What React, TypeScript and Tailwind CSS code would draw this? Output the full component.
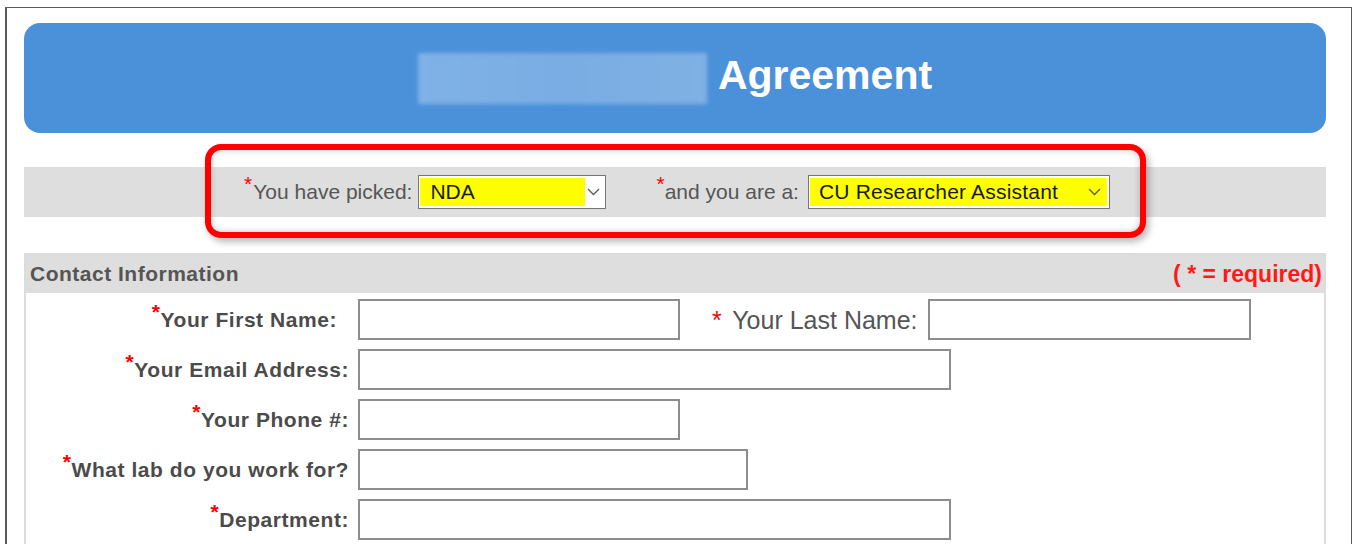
import React from "react";

const FONT = "font-['Liberation_Sans',Arial,sans-serif]";

function Chevron() {
  return (
    <svg width="13" height="8" viewBox="0 0 13 8" className="shrink-0">
      <polyline points="1,1 6.5,6.5 12,1" fill="none" stroke="#5a5a5a" strokeWidth="1.3" />
    </svg>
  );
}

function SupStar() {
  return <span className="relative -top-[8px] text-[#ff0000]">*</span>;
}

type FieldProps = {
  label: string;
  inputWidth: string;
  labelPad?: string;
  children?: React.ReactNode;
};

function FieldRow({ label, inputWidth, labelPad = "pr-[9px]", children }: FieldProps) {
  return (
    <div className="flex h-[41px] items-center">
      <div className={`w-[332px] text-right text-[21px] font-bold leading-[24px] tracking-[0.55px] text-[#4b4b4b] ${labelPad}`}>
        <SupStar />
        {label}
      </div>
      <div className={`h-[41px] border-2 border-[#8d8d8d] bg-white ${inputWidth}`} />
      {children}
    </div>
  );
}

export default function App() {
  return (
    <div className={`h-[544px] w-[1352px] overflow-hidden bg-white ${FONT}`}>
      <div className="ml-[5px] mt-[7px] h-[600px] w-[1347px] border-l-2 border-r border-t border-[#5a5a5a] pl-[17px] pt-[15px]">
        {/* Title banner */}
        <div className="flex h-[110px] w-[1302px] items-center justify-center gap-[11px] rounded-[16px] bg-[#4b91d9]">
          <div className="h-[51px] w-[289px] bg-gradient-to-r from-[#80b2e7] via-[#7aade3] to-[#80b1e5] blur-[2px]" />
          <div className="pb-[5px] text-[41px] font-bold leading-none text-white">Agreement</div>
        </div>

        {/* Agreement type picker */}
        <div className="relative mt-[34px] flex h-[50px] w-[1302px] items-center justify-center bg-[#dedede] pl-[4px] text-[21px] leading-[24px]">
          <div className="flex items-center">
            <span className="text-[#555555]">
              <SupStar />
              <span className="ml-[1px]">You have picked:</span>
            </span>
            <div className="ml-[6px] flex h-[34px] w-[188px] items-stretch border border-[#767676] bg-white py-[2px] pl-[1px] pr-[2px]">
              <div className="flex w-[165px] items-center bg-[#ffff00] pl-[10px] text-[#1a1a1a]">NDA</div>
              <div className="flex flex-1 items-center justify-center pr-[1px]">
                <Chevron />
              </div>
            </div>
          </div>
          <div className="ml-[50px] flex items-center">
            <span className="text-[#555555]">
              <SupStar />
              and you are a:
            </span>
            <div className="ml-[9px] flex h-[34px] w-[302px] items-stretch border border-[#767676] bg-white py-[2px] pl-[1px] pr-[2px]">
              <div className="flex flex-1 items-center justify-between bg-[#ffff00] pl-[9px] pr-[6px] tracking-[0.2px] text-[#1a1a1a]">
                <span>CU Researcher Assistant</span>
                <Chevron />
              </div>
            </div>
          </div>

          {/* Highlight frame drawn over the picker */}
          <div className="pointer-events-none absolute left-[181px] top-[-23px] h-[94px] w-[941px] rounded-[16px] border-[6px] border-[#ff0000] shadow-[inset_0_0_7px_rgba(0,0,0,0.22),3px_4px_7px_rgba(0,0,0,0.28)]" />
        </div>

        {/* Contact information */}
        <div className="mt-[36px] w-[1302px] border-2 border-[#dcdcdc] bg-white">
          <div className="flex h-[38px] items-center justify-between bg-[#dedede] pl-[4px] pr-[2px]">
            <span className="text-[21px] font-bold leading-[24px] tracking-[0.5px] text-[#555555]">Contact Information</span>
            <span className="text-[23px] font-bold leading-[24px] text-[#ff1a1a]">( * = required)</span>
          </div>
          <div className="flex flex-col gap-[9px] pb-[4px] pt-[6px]">
            <FieldRow label="Your First Name:" inputWidth="w-[322px]" labelPad="pr-[21px]">
              <span className="ml-[32px] text-[25px] leading-[28px] text-[#555555]">
                <span className="mr-[4px] text-[#ff0000]">*</span> Your Last Name:
              </span>
              <div className="ml-[10px] h-[41px] w-[323px] border-2 border-[#8d8d8d] bg-white" />
            </FieldRow>
            <FieldRow label="Your Email Address:" inputWidth="w-[593px]" />
            <FieldRow label="Your Phone #:" inputWidth="w-[322px]" />
            <FieldRow label="What lab do you work for?" inputWidth="w-[390px]" />
            <FieldRow label="Department:" inputWidth="w-[593px]" />
          </div>
        </div>
      </div>
    </div>
  );
}
